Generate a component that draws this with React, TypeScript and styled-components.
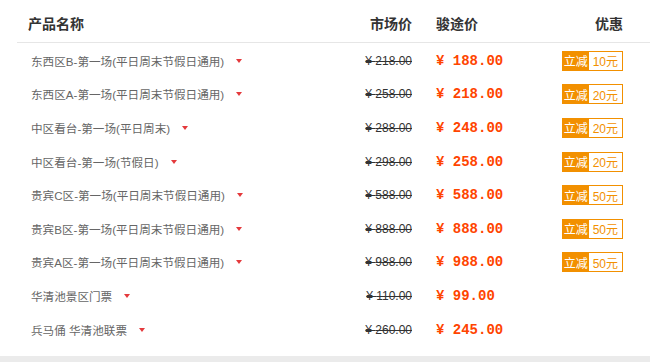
import React from "react";
import styled, { createGlobalStyle } from "styled-components";

const GlobalStyle = createGlobalStyle`
  html, body { margin: 0; padding: 0; background: #fff; }
  body { font-family: "Liberation Sans", "Noto Sans CJK SC", sans-serif; }
`;

const Page = styled.div`
  width: 650px;
  height: 362px;
  overflow: hidden;
  display: flex;
  flex-direction: column;
`;

const Table = styled.div`
  margin-left: 17px;
  display: flex;
  flex-direction: column;
`;

const cols = "333px 62px 24px 104px 83px 27px";

const HeaderRow = styled.div`
  display: grid;
  grid-template-columns: ${cols};
  height: 43px;
  padding-top: 4px;
  box-sizing: border-box;
  align-items: center;
  border-bottom: 1px solid #e6e6e6;
  font-size: 14px;
  font-weight: bold;
  color: #333;
`;

const HeadCell = styled.div<{ $align?: string; $pad?: number }>`
  text-align: ${(p) => p.$align || "left"};
  padding-left: ${(p) => p.$pad || 0}px;
  white-space: nowrap;
`;

const Body = styled.div`
  padding-top: 1px;
  display: flex;
  flex-direction: column;
`;

const Row = styled.div`
  display: grid;
  grid-template-columns: ${cols};
  height: 33.6px;
  align-items: center;
`;

const Name = styled.div`
  padding-left: 14px;
  font-size: 11.6px;
  color: #666;
  white-space: nowrap;
  display: flex;
  align-items: center;
`;

const Caret = styled.span`
  display: inline-block;
  margin-left: 12px;
  width: 0;
  height: 0;
  border-left: 3.5px solid transparent;
  border-right: 3.5px solid transparent;
  border-top: 4px solid #e4393c;
`;

const Market = styled.div`
  text-align: right;
  font-size: 12px;
  color: #333;
  text-decoration: line-through;
  white-space: nowrap;
`;

const Price = styled.div`
  font-family: "Liberation Mono", "DejaVu Sans Mono", monospace;
  font-weight: bold;
  font-size: 14px;
  color: #ff4400;
  white-space: nowrap;
`;

const DiscountCell = styled.div`
  display: flex;
  justify-content: flex-end;
`;

const Badge = styled.div`
  display: flex;
  height: 20px;
  font-size: 12px;
  border: 1px solid #f29000;
  box-sizing: border-box;
`;

const BadgeTag = styled.span`
  background: #f29000;
  color: #fff;
  padding: 0 1px;
  display: flex;
  align-items: center;
`;

const BadgeValue = styled.span`
  background: #fff;
  color: #f29000;
  padding: 0 4px;
  display: flex;
  align-items: center;
  min-width: 25px;
  justify-content: center;
`;

const Footer = styled.div`
  margin-top: auto;
  height: 6px;
  background: #ebebeb;
`;

type Item = { name: string; market: string; price: string; off?: string };

const items: Item[] = [
  { name: "东西区B-第一场(平日周末节假日通用)", market: "218.00", price: "188.00", off: "10元" },
  { name: "东西区A-第一场(平日周末节假日通用)", market: "258.00", price: "218.00", off: "20元" },
  { name: "中区看台-第一场(平日周末)", market: "288.00", price: "248.00", off: "20元" },
  { name: "中区看台-第一场(节假日)", market: "298.00", price: "258.00", off: "20元" },
  { name: "贵宾C区-第一场(平日周末节假日通用)", market: "588.00", price: "588.00", off: "50元" },
  { name: "贵宾B区-第一场(平日周末节假日通用)", market: "888.00", price: "888.00", off: "50元" },
  { name: "贵宾A区-第一场(平日周末节假日通用)", market: "988.00", price: "988.00", off: "50元" },
  { name: "华清池景区门票", market: "110.00", price: "99.00" },
  { name: "兵马俑 华清池联票", market: "260.00", price: "245.00" },
];

export default function App() {
  return (
    <>
      <GlobalStyle />
      <Page>
        <Table>
          <HeaderRow>
            <HeadCell $pad={11}>产品名称</HeadCell>
            <HeadCell $align="right">市场价</HeadCell>
            <span />
            <HeadCell>骏途价</HeadCell>
            <HeadCell $align="right">优惠</HeadCell>
            <span />
          </HeaderRow>
          <Body>
            {items.map((it) => (
              <Row key={it.name}>
                <Name>
                  {it.name}
                  <Caret />
                </Name>
                <Market>¥ {it.market}</Market>
                <span />
                <Price>¥ {it.price}</Price>
                <DiscountCell>
                  {it.off && (
                    <Badge>
                      <BadgeTag>立减</BadgeTag>
                      <BadgeValue>{it.off}</BadgeValue>
                    </Badge>
                  )}
                </DiscountCell>
                <span />
              </Row>
            ))}
          </Body>
        </Table>
        <Footer />
      </Page>
    </>
  );
}
